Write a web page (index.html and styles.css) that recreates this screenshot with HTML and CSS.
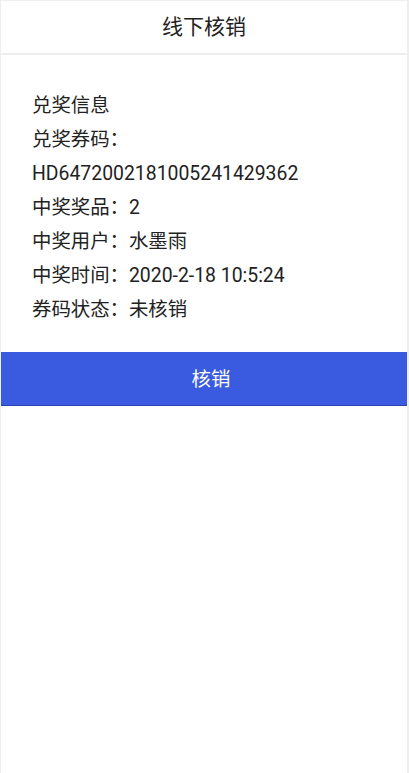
FILE: index.html
```html
<!DOCTYPE html>
<html lang="zh-CN">
<head>
    <meta charset="UTF-8">
    <meta name="viewport" content="width=device-width, initial-scale=1.0">
    <title>线下核销</title>
    <link rel="stylesheet" href="styles.css">
</head>
<body>
    <div id="wrapper">
        <div class="header">线下核销</div>

        <div class="info">
            <p>兑奖信息</p>
            <p>兑奖券码：</p>
            <p>HD6472002181005241429362</p>
            <p>中奖奖品：2</p>
            <p>中奖用户：水墨雨</p>
            <p>中奖时间：2020-2-18 10:5:24</p>
            <p>券码状态：未核销</p>
        </div>

        <button class="btn-verify">核销</button>
    </div>
</body>
</html>
```

FILE: styles.css
```css
* {
    margin: 0;
    padding: 0;
    box-sizing: border-box;
}

body {
    font-family: Roboto, "Noto Sans CJK SC", sans-serif;
    color: #222;
    background: #fff;
}

#wrapper {
    min-height: 100vh;
    border: 1px solid #eee;
    border-bottom: none;
    border-right-width: 2px;
}

.header {
    height: 54px;
    line-height: 52px;
    text-align: center;
    font-size: 21px;
    color: #222;
    border-bottom: 2px solid #eee;
}

.info {
    padding: 34px 31px 25px;
    font-size: 19.4px;
    line-height: 34px;
}

.btn-verify {
    display: block;
    width: 100%;
    height: 54px;
    padding: 0 0 3px 14px;
    border: none;
    border-bottom: 1px solid #2a44b0;
    background: #3a5be0;
    color: #fff;
    font-family: inherit;
    font-size: 19.4px;
}
```
